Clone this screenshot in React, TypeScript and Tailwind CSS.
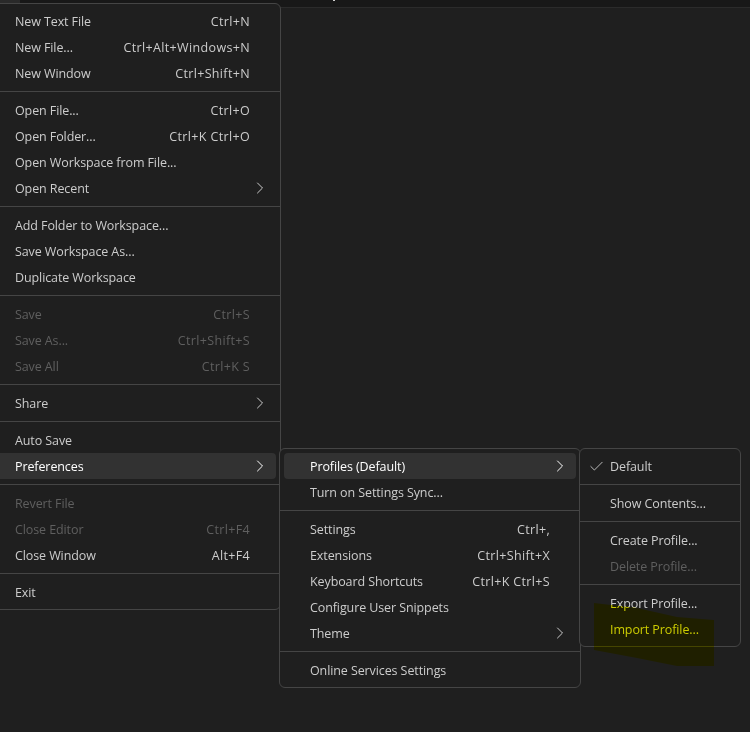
import { ChevronRight, Check } from 'lucide-react';

type Item = {
  label: string;
  keys?: string;
  off?: boolean;
  sub?: boolean;
  on?: boolean;
  check?: boolean;
};

const mainMenu: Item[][] = [
  [
    { label: 'New Text File', keys: 'Ctrl+N' },
    { label: 'New File...', keys: 'Ctrl+Alt+Windows+N' },
    { label: 'New Window', keys: 'Ctrl+Shift+N' },
  ],
  [
    { label: 'Open File...', keys: 'Ctrl+O' },
    { label: 'Open Folder...', keys: 'Ctrl+K Ctrl+O' },
    { label: 'Open Workspace from File...' },
    { label: 'Open Recent', sub: true },
  ],
  [
    { label: 'Add Folder to Workspace...' },
    { label: 'Save Workspace As...' },
    { label: 'Duplicate Workspace' },
  ],
  [
    { label: 'Save', keys: 'Ctrl+S', off: true },
    { label: 'Save As...', keys: 'Ctrl+Shift+S', off: true },
    { label: 'Save All', keys: 'Ctrl+K S', off: true },
  ],
  [{ label: 'Share', sub: true }],
  [{ label: 'Auto Save' }, { label: 'Preferences', sub: true, on: true }],
  [
    { label: 'Revert File', off: true },
    { label: 'Close Editor', keys: 'Ctrl+F4', off: true },
    { label: 'Close Window', keys: 'Alt+F4' },
  ],
  [{ label: 'Exit' }],
];

const prefsMenu: Item[][] = [
  [{ label: 'Profiles (Default)', sub: true, on: true }, { label: 'Turn on Settings Sync...' }],
  [
    { label: 'Settings', keys: 'Ctrl+,' },
    { label: 'Extensions', keys: 'Ctrl+Shift+X' },
    { label: 'Keyboard Shortcuts', keys: 'Ctrl+K Ctrl+S' },
    { label: 'Configure User Snippets' },
    { label: 'Theme', sub: true },
  ],
  [{ label: 'Online Services Settings' }],
];

const profilesMenu: Item[][] = [
  [{ label: 'Default', check: true }],
  [{ label: 'Show Contents...' }],
  [{ label: 'Create Profile...' }, { label: 'Delete Profile...', off: true }],
  [{ label: 'Export Profile...' }, { label: 'Import Profile...' }],
];

const MenuRow = ({ item, inset }: { item: Item; inset: string }) => {
  const color = item.off ? 'text-[#5f5f5f]' : item.on ? 'text-white' : 'text-[#cccccc]';
  return (
    <div
      className={`relative mx-[4px] flex h-[26px] items-center rounded-[4px] pr-[26px] pt-[2px] ${inset} ${color} ${
        item.on ? 'bg-[#323232]' : ''
      }`}
    >
      {item.check && (
        <Check className="absolute left-[4px] top-[5px] h-[17px] w-[17px]" strokeWidth={1.25} />
      )}
      <span className="flex-1 whitespace-nowrap">{item.label}</span>
      {item.keys && (
        <span className="ml-4 whitespace-nowrap tracking-[0.35px]">{item.keys}</span>
      )}
      {item.sub && (
        <ChevronRight
          className="absolute right-[6px] top-[3px] h-[20px] w-[20px]"
          strokeWidth={1.2}
        />
      )}
    </div>
  );
};

const Menu = ({
  groups,
  className,
  inset = 'pl-[26px]',
}: {
  groups: Item[][];
  className: string;
  inset?: string;
}) => (
  <div className={`rounded-[6px] border border-[#454545] bg-[#1f1f1f] py-[4px] ${className}`}>
    {groups.map((group, i) => (
      <div key={i}>
        {i > 0 && <div className="my-[5px] h-px bg-[#454545]" />}
        {group.map((item) => (
          <MenuRow key={item.label} item={item} inset={inset} />
        ))}
      </div>
    ))}
  </div>
);

export default function App() {
  return (
    <div className="relative h-[732px] w-[750px] overflow-hidden bg-[#1f1f1f] font-['Open_Sans','Noto_Sans',sans-serif] text-[12.5px] tracking-[-0.1px]">
      <div className="flex h-[8px] items-start border-b border-[#2b2b2b] bg-[#181818]">
        <div className="h-[3px] w-[20px] bg-[#2a2a2a]" />
        <div className="ml-[313px] h-px w-[2px] bg-[#cfcfcf]" />
      </div>

      {/* the file menu runs off the left edge of the shot */}
      <Menu
        groups={mainMenu}
        inset="pl-[20px]"
        className="absolute left-[-10px] top-[3px] w-[291px]"
      />
      <Menu groups={prefsMenu} className="absolute left-[279px] top-[448px] w-[302px]" />
      <Menu groups={profilesMenu} className="absolute left-[579px] top-[448px] w-[162px]" />

      {/* marker scribble over Import Profile */}
      <svg className="absolute left-0 top-0 mix-blend-multiply" width="750" height="732">
        <polygon
          points="594,603 637,608 677,617 714,620 714,666 677,666 637,658 594,650"
          fill="#ffff00"
        />
      </svg>
    </div>
  );
}
